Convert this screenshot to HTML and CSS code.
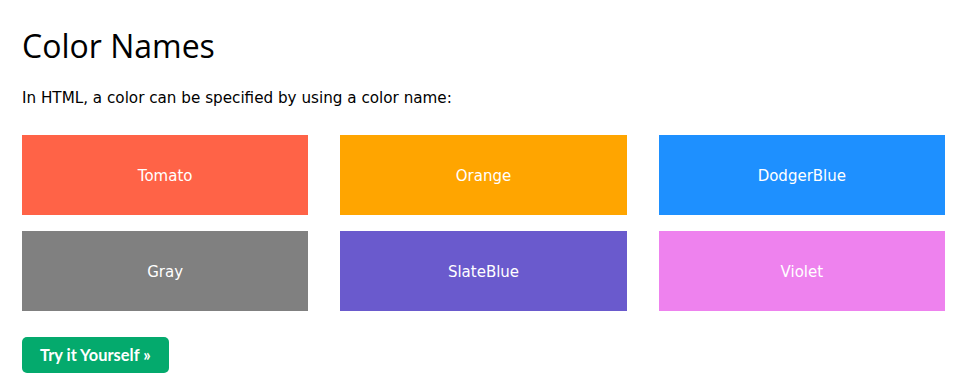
FILE: index.html
```html
<!DOCTYPE html>
<html lang="en">
<head>
    <meta charset="UTF-8">
    <meta name="viewport" content="width=device-width, initial-scale=1.0">
    <title>Color Names</title>
    <link rel="stylesheet" href="styles.css">
</head>
<body>
    <div class="main">
        <h1>Color Names</h1>
        <p class="intro">In HTML, a color can be specified by using a color name:</p>

        <!-- Color swatches -->
        <div class="swatches">
            <div class="swatch tomato">Tomato</div>
            <div class="swatch orange">Orange</div>
            <div class="swatch dodgerblue">DodgerBlue</div>
            <div class="swatch gray">Gray</div>
            <div class="swatch slateblue">SlateBlue</div>
            <div class="swatch violet">Violet</div>
        </div>

        <a class="try-btn" href="#">Try it Yourself &raquo;</a>
    </div>
</body>
</html>
```

FILE: styles.css
```css
body {
    margin: 0;
    background-color: #fff;
    color: #000;
    font-family: "DejaVu Sans", Verdana, sans-serif;
    font-size: 15px;
}

.main {
    padding: 0 18px 0 22px;
}

h1 {
    font-family: "Open Sans", "Segoe UI", Arial, sans-serif;
    font-weight: 400;
    font-size: 32px;
    line-height: 40px;
    margin: 26px 0 0 0;
}

.intro {
    margin: 21px 0 0 0;
    line-height: 22px;
    font-size: 15.2px;
}

.swatches {
    display: grid;
    grid-template-columns: repeat(3, 1fr);
    gap: 16px 32px;
    margin-top: 26px;
}

.swatch {
    box-sizing: border-box;
    height: 80px;
    padding-top: 2px;
    display: flex;
    justify-content: center;
    align-items: center;
    color: #fff;
    font-size: 15px;
}

.tomato { background-color: tomato; }
.orange { background-color: orange; }
.dodgerblue { background-color: dodgerblue; }
.gray { background-color: gray; }
.slateblue { background-color: slateblue; }
.violet { background-color: violet; }

.try-btn {
    display: inline-block;
    margin-top: 26px;
    padding: 0 18px;
    height: 36px;
    line-height: 36px;
    background-color: #04aa6d;
    color: #fff;
    border-radius: 5px;
    font-family: "Lato", "Open Sans", sans-serif;
    font-weight: 700;
    font-size: 16.4px;
    text-decoration: none;
}
```
